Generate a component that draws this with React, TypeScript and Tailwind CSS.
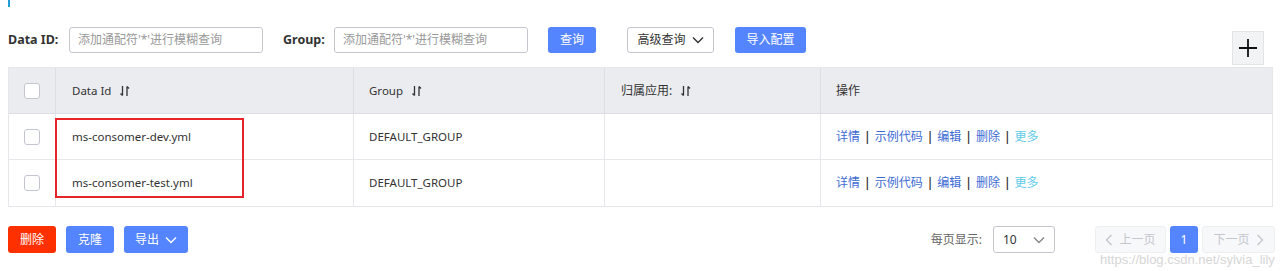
import React from "react";

const font = { fontFamily: '"Noto Sans", "Noto Sans CJK SC", sans-serif' };

function SortIcon() {
  return (
    <svg width="12" height="12" viewBox="0 0 12 12" className="ml-2 inline-block">
      <path d="M3.5 1 V10.5 M1.5 8.5 L3.5 10.5" stroke="#333" strokeWidth="1.3" fill="none" />
      <path d="M8 11 V1.5 M8 1.5 L10 3.5" stroke="#333" strokeWidth="1.3" fill="none" />
    </svg>
  );
}

function Chevron({ color = "#333" }: { color?: string }) {
  return (
    <svg width="12" height="8" viewBox="0 0 12 8" className="ml-1.5">
      <path d="M1 1.5 L6 6.5 L11 1.5" stroke={color} strokeWidth="1.4" fill="none" />
    </svg>
  );
}

function Checkbox() {
  return <div className="w-4 h-4 rounded-[3px] border border-[#c4c6cf] bg-white" />;
}

function Actions() {
  const sep = <span className="mx-[4px] text-[#333] font-semibold">|</span>;
  return (
    <div className="flex items-center text-[12px] text-[#3d6bd4]">
      <span>详情</span>
      {sep}
      <span>示例代码</span>
      {sep}
      <span>编辑</span>
      {sep}
      <span>删除</span>
      {sep}
      <span className="text-[#5fcbe8]">更多</span>
    </div>
  );
}

const rows = ["ms-consomer-dev.yml", "ms-consomer-test.yml"];

export default function App() {
  return (
    <div className="relative w-[1280px] h-[271px] bg-white overflow-hidden" style={font}>
      <div className="h-[7px] pl-2">
        <div className="w-[2px] h-[7px] bg-[#1e9fd8]" />
      </div>

      {/* search row */}
      <div className="relative flex items-center h-[26px] mt-[20px] pl-2">
        <span className="text-[12.5px] font-bold text-[#333] w-[61px]">Data ID:</span>
        <div className="w-[194px] h-[26px] border border-[#c4c6cf] rounded-[3px] flex items-center px-[8px] text-[12px] text-[#999]">
          添加通配符'*'进行模糊查询
        </div>
        <span className="ml-[20px] text-[12.5px] font-bold text-[#333] w-[51px]">Group:</span>
        <div className="w-[194px] h-[26px] border border-[#c4c6cf] rounded-[3px] flex items-center px-[8px] text-[12px] text-[#999]">
          添加通配符'*'进行模糊查询
        </div>
        <div className="ml-[20px] w-[48px] h-[26px] rounded-[3px] bg-[#5584ff] text-white text-[12px] flex items-center justify-center">
          查询
        </div>
        <div className="ml-[31px] w-[87px] h-[26px] rounded-[3px] border border-[#c4c6cf] bg-white text-[#333] text-[12px] flex items-center justify-center">
          高级查询
          <Chevron />
        </div>
        <div className="ml-[21px] w-[71px] h-[26px] rounded-[3px] bg-[#5584ff] text-white text-[12px] flex items-center justify-center">
          导入配置
        </div>
        <div className="absolute left-[1232px] top-[4px] w-[32px] h-[34px] bg-[#f2f3f5] border border-[#e3e4e6] flex items-center justify-center">
          <svg width="20" height="20" viewBox="0 0 20 20">
            <path d="M10 1 V19 M1 10 H19" stroke="#111" strokeWidth="1.8" />
          </svg>
        </div>
      </div>

      {/* table */}
      <div className="mt-[14px] ml-2 w-[1265px] border border-[#e6e7eb] text-[12px] text-[#333]">
        <div className="grid grid-cols-[47px_298px_251px_216px_451px] h-[46px] bg-[#ebecf0] border-b border-[#dcdee3]">
          <div className="flex items-center justify-center border-r border-[#dcdee3]">
            <Checkbox />
          </div>
          <div className="flex items-center pl-[16px] border-r border-[#dcdee3] text-[11.5px]">
            Data Id
            <SortIcon />
          </div>
          <div className="flex items-center pl-[15px] border-r border-[#dcdee3] text-[11.5px]">
            Group
            <SortIcon />
          </div>
          <div className="flex items-center pl-[16px] border-r border-[#dcdee3]">
            归属应用:
            <SortIcon />
          </div>
          <div className="flex items-center pl-[15px]">操作</div>
        </div>
        {rows.map((r, i) => (
          <div
            key={r}
            className={`grid grid-cols-[47px_298px_251px_216px_451px] h-[46px] ${i === 0 ? "border-b border-[#e6e7eb]" : ""}`}
          >
            <div className="flex items-center justify-center border-r border-[#e6e7eb]">
              <Checkbox />
            </div>
            <div className="flex items-center pl-[16px] border-r border-[#e6e7eb] text-[11.5px]">{r}</div>
            <div className="flex items-center pl-[15px] border-r border-[#e6e7eb] text-[11.5px]">DEFAULT_GROUP</div>
            <div className="border-r border-[#e6e7eb]" />
            <div className="flex items-center pl-[15px]">
              <Actions />
            </div>
          </div>
        ))}
      </div>

      {/* red annotation box */}
      <div className="absolute left-[55px] top-[118px] w-[189px] h-[80px] border-2 border-[#e8242b]" />

      {/* bottom row */}
      <div className="flex items-center mt-[19px] pl-2 h-[27px]">
        <div className="w-[48px] h-[27px] rounded-[3px] bg-[#ff3000] text-white text-[12px] flex items-center justify-center">
          删除
        </div>
        <div className="ml-[10px] w-[48px] h-[27px] rounded-[3px] bg-[#5584ff] text-white text-[12px] flex items-center justify-center">
          克隆
        </div>
        <div className="ml-[10px] w-[64px] h-[27px] rounded-[3px] bg-[#5584ff] text-white text-[12px] flex items-center justify-center">
          导出
          <Chevron color="#fff" />
        </div>

        <div className="ml-auto flex items-center">
          <span className="text-[12px] text-[#666]">每页显示:</span>
          <div className="ml-[11px] w-[62px] h-[27px] rounded-[3px] border border-[#c4c6cf] flex items-center justify-between pl-[9px] pr-[9px] text-[12px] text-[#333]">
            10
            <Chevron color="#888" />
          </div>
          <div className="ml-[40px] w-[71px] h-[27px] rounded-[3px] border border-[#eeeff1] bg-[#f7f8fa] text-[#c4c6cf] text-[12px] flex items-center justify-center">
            <svg width="8" height="12" viewBox="0 0 8 12" className="mr-1.5">
              <path d="M6.5 1 L1.5 6 L6.5 11" stroke="#c4c6cf" strokeWidth="1.4" fill="none" />
            </svg>
            上一页
          </div>
          <div className="ml-[4px] w-[28px] h-[27px] rounded-[3px] bg-[#5584ff] text-white text-[12px] flex items-center justify-center">
            1
          </div>
          <div className="ml-[4px] w-[73px] h-[27px] rounded-[3px] border border-[#eeeff1] bg-[#f7f8fa] text-[#c4c6cf] text-[12px] flex items-center justify-center">
            下一页
            <svg width="8" height="12" viewBox="0 0 8 12" className="ml-1.5">
              <path d="M1.5 1 L6.5 6 L1.5 11" stroke="#c4c6cf" strokeWidth="1.4" fill="none" />
            </svg>
          </div>
          <div className="w-[5px]" />
        </div>
      </div>

      {/* watermark */}
      <div
        className="absolute left-[1100px] top-[250px] text-[13px] text-[#d6d6d6] whitespace-nowrap"
        style={{ fontFamily: '"Liberation Sans", sans-serif' }}
      >
        https://blog.csdn.net/sylvia_lily
      </div>
    </div>
  );
}
